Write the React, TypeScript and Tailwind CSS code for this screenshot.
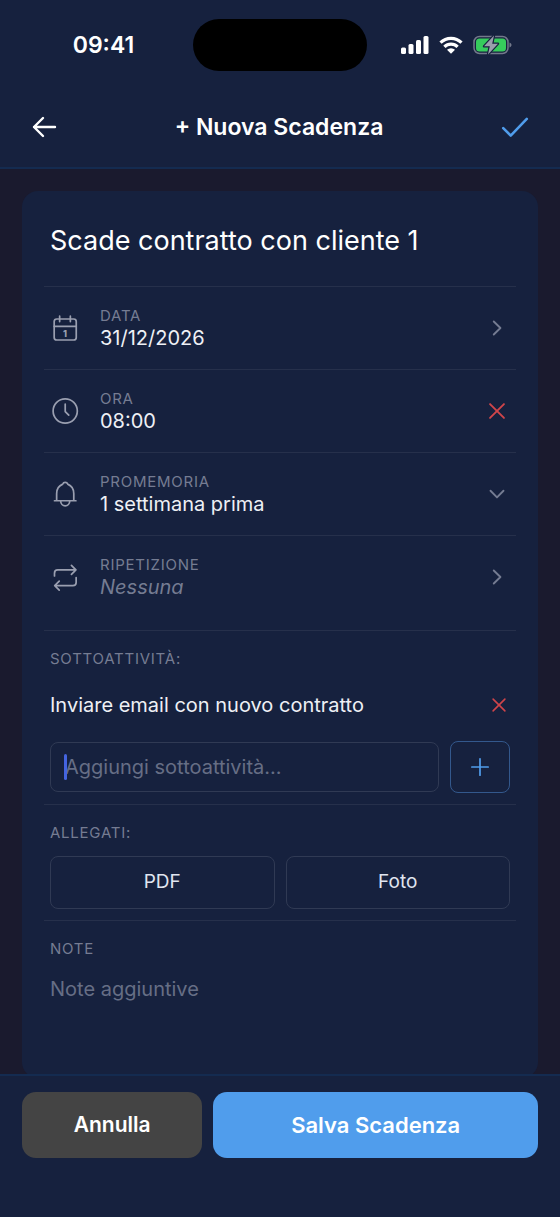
import { useState } from 'react';

const reminders = ['Nessuno', '1 giorno prima', '1 settimana prima', '1 mese prima'];

function Icon({ size = 30, stroke = 1.6, className = '', children }: any) {
  return (
    <svg
      width={size}
      height={size}
      viewBox="0 0 28 28"
      fill="none"
      stroke="currentColor"
      strokeWidth={stroke}
      strokeLinecap="round"
      strokeLinejoin="round"
      className={`shrink-0 ${className}`}
      aria-hidden="true"
    >
      {children}
    </svg>
  );
}

const CalendarIcon = () => (
  <Icon className="text-[#9a9fb0]">
    <rect x="3.9" y="5.6" width="20.6" height="19.6" rx="2.4" />
    <path d="M3.9 12.4h20.600M9 3v5M19 3v5" />
    <text x="14" y="22" textAnchor="middle" fontSize="8.500" fontWeight="800" fill="currentColor" stroke="none">1</text>
  </Icon>
);

const ClockIcon = () => (
  <Icon className="text-[#9a9fb0]">
    <circle cx="14.200" cy="14" r="11.300" />
    <path d="M14.200 7.600v6.900l3.300 3.400" />
  </Icon>
);

const BellIcon = () => (
  <Icon className="text-[#9a9fb0]">
    <path d="M4.200 20.300h20M6.200 20.300v-6.600c0-4.600 2.700-7.700 5.700-8.900.6-2.300 4-2.300 4.600 0 3 1.200 5.700 4.300 5.700 8.900v6.600" />
    <path d="M10 20.800a4.200 4.200 0 0 0 8.400 0" />
  </Icon>
);

const RepeatIcon = () => (
  <Icon className="text-[#9a9fb0]">
    <path d="M4.200 13v-2.600a3 3 0 0 1 3-3h16.800M20 3.200l4.200 4.200-4.200 4.200" />
    <path d="M24.400 14.500v4.600a3 3 0 0 1-3 3H4.600M8.600 17.900l-4.200 4.200 4.200 4.200" />
  </Icon>
);

const ChevronRight = () => (
  <Icon size={26} stroke={2} className="text-[#757c92]">
    <path d="M10.500 7l7.200 7-7.200 7" />
  </Icon>
);

const CloseIcon = ({ size }: { size: number }) => (
  <Icon size={size} stroke={2} className="text-[#d0454a]">
    <path d="M6.500 6.500l15 15M21.500 6.500l-15 15" />
  </Icon>
);

function StatusBar() {
  return (
    <div className="grid grid-cols-[1fr_174px_1fr] items-center pt-[19px]">
      <span className="pl-[14px] text-center text-[23px] font-semibold">09:41</span>
      <div className="h-[52px] rounded-full bg-black" />
      <div className="flex items-center gap-[10px] pl-[34px]">
        <svg width="28" height="18" viewBox="0 0 28 18" fill="#fff" aria-hidden="true">
          <rect x="0" y="11.500" width="5" height="6.500" rx="1.500" />
          <rect x="7.500" y="8" width="5" height="10" rx="1.500" />
          <rect x="15" y="4" width="5" height="14" rx="1.500" />
          <rect x="22.500" y="0" width="5" height="18" rx="1.500" />
        </svg>
        <svg width="24" height="18" viewBox="0 0 24 18" fill="none" stroke="#fff" strokeWidth="3.200" aria-hidden="true">
          <path d="M1.500 6.600a15 15 0 0 1 21 0" />
          <path d="M5.400 10.900a9.300 9.300 0 0 1 13.200 0" />
          <path d="M12 17.800l-4-4a5.700 5.700 0 0 1 8 0z" fill="#fff" stroke="none" />
        </svg>
        <svg width="39" height="22" viewBox="0 0 39 22" aria-hidden="true">
          <rect x="1" y="2.500" width="34" height="17" rx="5.500" fill="none" stroke="#73798b" strokeWidth="1.500" />
          <rect x="3" y="4.500" width="30" height="13" rx="3.500" fill="#36cc5c" />
          <path d="M36.500 8.500v5c1.200-.4 2-1.300 2-2.500s-.8-2.100-2-2.500z" fill="#73798b" />
          <path
            d="M21 1.500L11 12.300h5.800L15 20.500l10-10.800h-5.800z"
            fill="#9a9fac"
            stroke="#16213e"
            strokeWidth="2.400"
            strokeLinejoin="round"
            paintOrder="stroke"
          />
        </svg>
      </div>
    </div>
  );
}

const rowClass = 'flex h-[83px] items-center border-t border-[#26304b] px-1.5';
const labelClass = 'block text-[15px] leading-5 tracking-wider text-[#757c92] uppercase';
const valueClass = 'block text-[20px] leading-6 text-[#eef0f5]';
const sectionClass = 'border-t border-[#26304b] px-1.5 pt-[18px] pb-[11px]';

export default function App() {
  const [title, setTitle] = useState('Scade contratto con cliente 1');
  const [time, setTime] = useState('08:00');
  const [reminder, setReminder] = useState('1 settimana prima');
  const [subtasks, setSubtasks] = useState(['Inviare email con nuovo contratto']);
  const [draft, setDraft] = useState('');
  const [notes, setNotes] = useState('');

  const addSubtask = () => {
    if (!draft.trim()) return;
    setSubtasks([...subtasks, draft.trim()]);
    setDraft('');
  };

  return (
    <div className="flex min-h-screen flex-col bg-[#1a1a2e] font-['Inter',sans-serif] text-white">
      {/* Header */}
      <header className="border-b-2 border-[#142b50] bg-[#16213e]">
        <StatusBar />
        <div className="mt-4 flex h-20 items-center justify-between px-[30px]">
          <button type="button" aria-label="Indietro">
            <Icon size={28} stroke={2.400}>
              <path d="M25 14H4M13 5l-9 9 9 9" />
            </Icon>
          </button>
          <h1 className="text-[23px] font-semibold">+ Nuova Scadenza</h1>
          <button type="button" aria-label="Conferma">
            <Icon stroke={2.400} className="text-[#509dec]">
              <path d="M3 15l7 7L25 6.500" />
            </Icon>
          </button>
        </div>
      </header>

      {/* Form */}
      <main className="flex flex-1 flex-col px-[22px] pt-[22px]">
        <form className="flex flex-1 flex-col rounded-2xl bg-[#16213e] px-[22px]" onSubmit={(e) => e.preventDefault()}>
          <input
            aria-label="Titolo"
            value={title}
            onChange={(e) => setTitle(e.target.value)}
            className="mt-8 mb-[27px] w-full px-1.5 text-[27px] leading-9 outline-none"
          />

          <button type="button" className={`${rowClass} text-left`}>
            <CalendarIcon />
            <span className="ml-5 flex-1">
              <span className={labelClass}>Data</span>
              <span className={valueClass}>31/12/2026</span>
            </span>
            <ChevronRight />
          </button>

          <div className={rowClass}>
            <ClockIcon />
            <button type="button" className="ml-5 flex-1 text-left">
              <span className={labelClass}>Ora</span>
              <span className={valueClass}>{time}</span>
            </button>
            <button type="button" aria-label="Rimuovi ora" onClick={() => setTime('--:--')}>
              <CloseIcon size={26} />
            </button>
          </div>

          <div className={rowClass}>
            <BellIcon />
            <div className="ml-5 flex-1">
              <label htmlFor="reminder" className={labelClass}>Promemoria</label>
              <select
                id="reminder"
                value={reminder}
                onChange={(e) => setReminder(e.target.value)}
                className={`${valueClass} w-full appearance-none outline-none`}
              >
                {reminders.map((r) => (
                  <option key={r}>{r}</option>
                ))}
              </select>
            </div>
            <Icon size={26} stroke={2} className="text-[#757c92]">
              <path d="M7 10.500l7 7.200 7-7.200" />
            </Icon>
          </div>

          <button type="button" className={`${rowClass} mb-3 text-left`}>
            <RepeatIcon />
            <span className="ml-5 flex-1">
              <span className={labelClass}>Ripetizione</span>
              <span className="block text-[20px] leading-6 text-[#757c92] italic">Nessuna</span>
            </span>
            <ChevronRight />
          </button>

          {/* Subtasks */}
          <section className={sectionClass}>
            <label htmlFor="subtask" className={labelClass}>Sottoattività:</label>
            {subtasks.map((task) => (
              <div key={task} className="flex h-[72px] items-center justify-between">
                <span className={valueClass}>{task}</span>
                <button
                  type="button"
                  aria-label="Rimuovi sottoattività"
                  onClick={() => setSubtasks(subtasks.filter((t) => t !== task))}
                >
                  <CloseIcon size={22} />
                </button>
              </div>
            ))}
            <div className="flex items-center gap-[11px]">
              <div className="relative flex-1">
                <input
                  id="subtask"
                  value={draft}
                  onChange={(e) => setDraft(e.target.value)}
                  placeholder="Aggiungi sottoattività..."
                  className="block h-[50px] w-full rounded-lg border border-[#303a54] px-[14px] text-[20px] caret-[#4464e0] outline-none placeholder:text-[#666e85]"
                />
                {!draft && <span className="absolute top-3 left-[14px] h-[26px] w-[3px] rounded-full bg-[#4464e0]" />}
              </div>
              <button
                type="button"
                aria-label="Aggiungi"
                onClick={addSubtask}
                className="flex h-[52px] w-[60px] items-center justify-center rounded-lg border border-[#33588c]"
              >
                <Icon size={24} stroke={2} className="text-[#509dec]">
                  <path d="M14 4.500v19M4.500 14h19" />
                </Icon>
              </button>
            </div>
          </section>

          {/* Attachments */}
          <section className={sectionClass}>
            <h2 className={labelClass}>Allegati:</h2>
            <div className="mt-[13px] grid grid-cols-2 gap-[11px]">
              {['PDF', 'Foto'].map((kind) => (
                <button
                  key={kind}
                  type="button"
                  className="h-[53px] rounded-lg border border-[#303a54] text-[19px] text-[#e0e5f0]"
                >
                  {kind}
                </button>
              ))}
            </div>
          </section>

          {/* Notes */}
          <section className={sectionClass}>
            <label htmlFor="notes" className={labelClass}>Note</label>
            <textarea
              id="notes"
              value={notes}
              onChange={(e) => setNotes(e.target.value)}
              placeholder="Note aggiuntive"
              rows={3}
              className="mt-4 block h-[78px] w-full resize-none text-[20px] leading-7 outline-none placeholder:text-[#666e85]"
            />
          </section>
        </form>
      </main>

      {/* Actions */}
      <footer className="relative -mt-1 flex gap-[11px] border-t-2 border-[#142b50] bg-[#16213e] px-[22px] pt-4 pb-[59px]">
        <button type="button" className="h-[66px] flex-5 rounded-[14px] bg-[#444444] text-[21px] font-semibold">
          Annulla
        </button>
        <button type="button" className="h-[66px] flex-9 rounded-[14px] bg-[#509dec] text-[22px] font-semibold">
          Salva Scadenza
        </button>
      </footer>
    </div>
  );
}
